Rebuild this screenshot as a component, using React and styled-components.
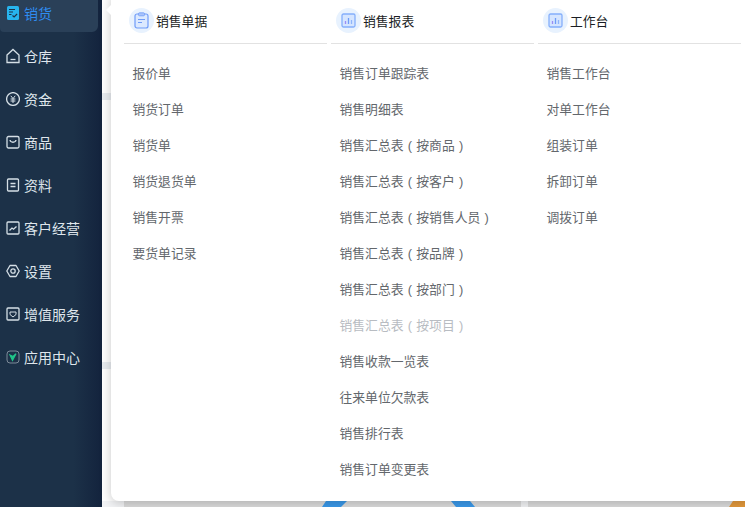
import React from "react"
import styled, { createGlobalStyle } from 'styled-components';

const Global = createGlobalStyle`
    html, body {
        margin: 0;
        padding: 0;
        height: 100%;
        overflow: hidden;
    }
    body {
        font-family: "Liberation Sans", "Noto Sans CJK TC", sans-serif;
    }
    ul {
        list-style: none;
        margin: 0;
        padding: 0;
    }
`

const Page = styled.div`
    display: flex;
    width: 745px;
    height: 507px;
    overflow: hidden;
    background: #fff;
`

const Sidebar = styled.nav`
    width: 102px;
    flex-shrink: 0;
    background: linear-gradient(90deg, #1c3148 0%, #1c3148 72%, #13233d 100%);
`

const MenuList = styled.ul`
    display: flex;
    flex-direction: column;
    gap: 3px;
    margin-top: -8px;
    padding-right: 4px;
`

const MenuItem = styled.li`
    display: flex;
    align-items: center;
    gap: 4px;
    height: 38px;
    padding: 2px 0 0 6px;
    font-size: 14px;
    color: ${p => (p.$active ? '#2f8cf0' : '#dfe6ec')};
    background: ${p => (p.$active ? '#2a4058' : 'transparent')};
    border-radius: 0 0 6px 4px;
    svg {
        flex-shrink: 0;
    }
`

const Main = styled.main`
    flex: 1;
    position: relative;
    background: #fff;
`

const Backdrop = styled.div`
    display: flex;
    flex-direction: column;
    height: 100%;
`

const Strip = styled.div`
    height: 7px;
    background: #e9edf1;
    margin-top: ${p => p.$top}px;
`

const CardRow = styled.div`
    display: flex;
    gap: 7px;
    margin-top: auto;
    height: 6px;
    padding-left: 22px;
    background: #f3f4f6;
`

const Card = styled.div`
    flex: ${p => p.$size};
    position: relative;
    overflow: hidden;
    background: #dcdcdc;
`

const Ring = styled.svg`
    position: absolute;
    left: ${p => p.$left}px;
    bottom: 0;
`

const Panel = styled.section`
    position: absolute;
    left: 9px;
    top: -8px;
    right: -8px;
    height: 509px;
    display: flex;
    gap: 4px;
    padding: 8px 8px 0 13px;
    box-sizing: border-box;
    background: #fff;
    border-radius: 8px;
    box-shadow: 0 2px 12px rgba(0, 0, 0, 0.22);
    &::before {
        content: "";
        position: absolute;
        left: -5px;
        top: 13px;
        border-style: solid;
        border-width: 5px 5px 5px 0;
        border-color: transparent #fff transparent transparent;
    }
`

const Column = styled.div`
    width: 203px;
    flex-shrink: 0;
`

const ColumnHead = styled.div`
    display: flex;
    align-items: center;
    gap: 2px;
    height: 44px;
    box-sizing: border-box;
    padding: 0 0 2px 5px;
    border-bottom: 1px solid #e2e2e2;
    font-size: 12.8px;
    color: #1a1d24;
`

const HeadIcon = styled.span`
    display: flex;
    align-items: center;
    justify-content: center;
    width: 25px;
    height: 25px;
    border-radius: 50%;
    background: #e8f2fe;
`

const Links = styled.ul`
    padding: 12px 0 0 8.5px;
`

const LinkItem = styled.li`
    height: 36px;
    line-height: 36px;
    font-size: 12.8px;
    white-space: nowrap;
    color: ${p => (p.$disabled ? '#b8bcc2' : '#63676c')};
`

// narrow bracket centred in one full character cell
const Paren = styled.span`
    display: inline-block;
    width: 12.8px;
    text-align: center;
`

const stroke = { fill: 'none', stroke: '#d5dfe6', strokeWidth: 1.3 }

const ICONS = {
    sale: (
        <svg width="14" height="16" viewBox="0 0 14 16">
            <rect x="1" y="1" width="12" height="14" rx="1.5" fill="#27b4ee" />
            <path d="M3 4.500h6M3 7h4M3 9.500h2.500" stroke="#1c3148" strokeWidth="1" fill="none" />
            <path d="M6.500 10.500l1.600 1.500 3-3" stroke="#1c3148" strokeWidth="1.200" fill="none" />
        </svg>
    ),
    store: (
        <svg width="14" height="16" viewBox="0 0 14 16">
            <path d="M1 7L7 1.500 13 7v7.500H1z" {...stroke} />
            <path d="M4.500 11.500h5" {...stroke} />
        </svg>
    ),
    money: (
        <svg width="14" height="14" viewBox="0 0 14 14">
            <circle cx="7" cy="7" r="6.400" {...stroke} />
            <path d="M4.800 3.800L7 6.600l2.200-2.800M4.600 7h4.800M4.600 9h4.800M7 6.600V11" {...stroke} strokeWidth="1" />
        </svg>
    ),
    goods: (
        <svg width="14" height="14" viewBox="0 0 14 14">
            <rect x="1" y="1.500" width="12" height="11.500" rx="1.500" {...stroke} />
            <path d="M4 5c.5 3 5.500 3 6 0" {...stroke} />
        </svg>
    ),
    data: (
        <svg width="14" height="14" viewBox="0 0 14 14">
            <rect x="1.500" y="1" width="11" height="12" rx="1" {...stroke} />
            <path d="M4.500 5.500h5M4.500 8.500h5" {...stroke} />
        </svg>
    ),
    client: (
        <svg width="14" height="14" viewBox="0 0 14 14">
            <rect x="1" y="1" width="12" height="12" rx="1" {...stroke} />
            <path d="M3.500 9.500l2.500-2.500 1.500 1.200 3-2.700" {...stroke} />
        </svg>
    ),
    setting: (
        <svg width="14" height="14" viewBox="0 0 14 14">
            <path d="M4 1.500h6L13.200 7 10 12.500H4L.8 7z" {...stroke} strokeLinejoin="round" />
            <circle cx="7" cy="7" r="2.200" {...stroke} />
        </svg>
    ),
    service: (
        <svg width="14" height="14" viewBox="0 0 14 14">
            <rect x="1" y="1" width="12" height="12" rx="1" {...stroke} />
            <path d="M4 5h6v2.500L7 10 4 7.500z" {...stroke} strokeWidth="1" />
        </svg>
    ),
    app: (
        <svg width="14" height="14" viewBox="0 0 14 14">
            <rect x="1" y="1" width="12" height="12" rx="3" fill="none" stroke="#7d8b99" strokeWidth="1" />
            <path d="M4 5L6.500 10.500 10 3.800 7 6.500z" fill="#20c489" stroke="#20c489" strokeWidth="1.200" />
        </svg>
    ),
}

const ClipIcon = () => (
    <svg width="15" height="17" viewBox="0 0 15 17">
        <rect x="1" y="2" width="13" height="14" rx="2" fill="#dbe9ff" stroke="#6f9cf8" strokeWidth="1.200" />
        <rect x="4.500" y="0.800" width="6" height="3" rx="1" fill="#a9c4fb" stroke="#6f9cf8" strokeWidth="0.800" />
        <path d="M4 7.500h7M4 10.500h4" stroke="#6f9cf8" strokeWidth="1.100" />
    </svg>
)

const ChartIcon = () => (
    <svg width="15" height="15" viewBox="0 0 15 15">
        <rect x="1" y="1" width="13" height="13" rx="1.500" fill="#d5e5ff" stroke="#84aefb" strokeWidth="1.300" />
        <path d="M4.500 11V8" stroke="#9b8cf5" strokeWidth="1.300" />
        <path d="M7.500 11V5" stroke="#6f9cf8" strokeWidth="1.300" />
        <path d="M10.500 11V7" stroke="#8fb5fb" strokeWidth="1.300" />
    </svg>
)

const menu = [
    ['sale', '销货'],
    ['store', '仓库'],
    ['money', '资金'],
    ['goods', '商品'],
    ['data', '资料'],
    ['client', '客户经营'],
    ['setting', '设置'],
    ['service', '增值服务'],
    ['app', '应用中心'],
]

const columns = [
    {
        title: '销售单据',
        icon: <ClipIcon />,
        links: ['报价单', '销货订单', '销货单', '销货退货单', '销售开票', '要货单记录'],
    },
    {
        title: '销售报表',
        icon: <ChartIcon />,
        links: [
            '销售订单跟踪表',
            '销售明细表',
            '销售汇总表(按商品)',
            '销售汇总表(按客户)',
            '销售汇总表(按销售人员)',
            '销售汇总表(按品牌)',
            '销售汇总表(按部门)',
            '销售汇总表(按项目)',
            '销售收款一览表',
            '往来单位欠款表',
            '销售排行表',
            '销售订单变更表',
        ],
    },
    {
        title: '工作台',
        icon: <ChartIcon />,
        links: ['销售工作台', '对单工作台', '组装订单', '拆卸订单', '调拨订单'],
    },
]

const linkText = link =>
    link.split(/([()])/).map((part, i) =>
        part === '(' || part === ')'
            ? <Paren key={i}>{part}</Paren>
            : part
    )

const App = () => (
    <Page>
        <Global />
        <Sidebar>
            <MenuList>
                {menu.map(([icon, label], i) => (
                    <MenuItem key={label} $active={i === 0}>
                        {ICONS[icon]}
                        {label}
                    </MenuItem>
                ))}
            </MenuList>
        </Sidebar>
        <Main>
            <Backdrop>
                <Strip $top={93} />
                <Strip $top={262} />
                <CardRow>
                    <Card $size={397}>
                        <Ring $left={198} width="155" height="6" viewBox="0 0 155 6">
                            <path d="M4 0h21l-6 6H0z" fill="#3a99ea" />
                            <path d="M129 0h19l5 6h-19z" fill="#3a99ea" />
                        </Ring>
                    </Card>
                    <Card $size={217}>
                        <Ring $left={200} width="17" height="6" viewBox="0 0 17 6">
                            <path d="M5 0h12v6H1z" fill="#e59a3c" />
                        </Ring>
                    </Card>
                </CardRow>
            </Backdrop>
            <Panel>
                {columns.map(col => (
                    <Column key={col.title}>
                        <ColumnHead>
                            <HeadIcon>{col.icon}</HeadIcon>
                            {col.title}
                        </ColumnHead>
                        <Links>
                            {col.links.map(link => (
                                <LinkItem key={link} $disabled={link.includes('按项目')}>{linkText(link)}</LinkItem>
                            ))}
                        </Links>
                    </Column>
                ))}
            </Panel>
        </Main>
    </Page>
)

export default App
